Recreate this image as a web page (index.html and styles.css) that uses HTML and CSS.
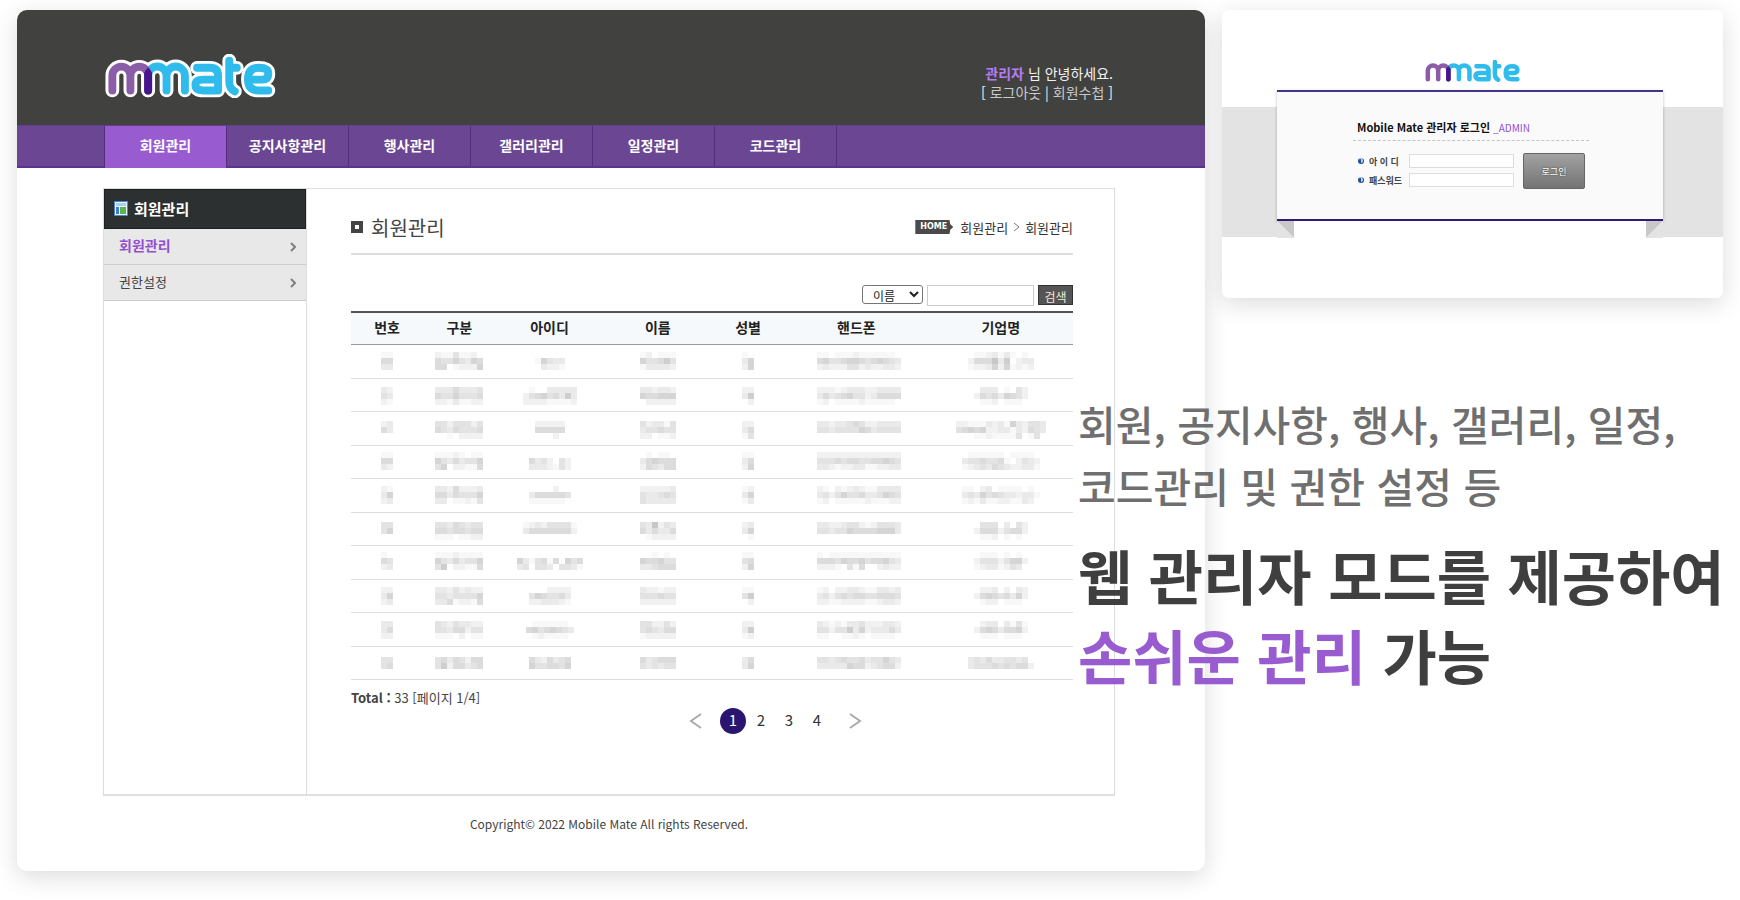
FILE: index.html
```html
<!DOCTYPE html>
<html lang="ko">
<head>
<meta charset="utf-8">
<title>mmate 웹 관리자</title>
<link rel="stylesheet" href="styles.css">
</head>
<body>
<svg class="defs" aria-hidden="true">
  <defs>
    <g id="logo-lines" fill="none" stroke-linecap="round" stroke-linejoin="round">
      <path d="M65 153V108a27 27 0 0 1 55 0V153M120 108a27 27 0 0 1 54 0V153"/>
      <path d="M174 153V108a28 28 0 0 1 56 0V153M230 108a28 28 0 0 1 56 0V153"/>
      <path d="M323 84H362Q387 84 387 108V153H342Q318 153 318 136Q318 120 342 120H387"/>
      <path d="M421 62V126Q421 148 438 156M421 84H444"/>
      <path d="M540 153H510Q478 153 478 119Q478 84 510 84Q540 84 540 102Q540 120 522 120H482"/>
    </g>
    <g id="logo-color" fill="none" stroke-width="24" stroke-linecap="round" stroke-linejoin="round">
      <path stroke="#2fbbeb" d="M174 153V108a28 28 0 0 1 56 0V153M230 108a28 28 0 0 1 56 0V153"/>
      <path stroke="#8b5ca8" d="M65 153V108a27 27 0 0 1 55 0V153M120 108a27 27 0 0 1 54 0V153"/>
      <path stroke="#47168c" d="M174 153V104"/>
      <path fill="#47168c" stroke="none" d="M162 104Q166 88 174 84Q182 90 186 104z"/>
      <path stroke="#2fbbeb" d="M323 84H362Q387 84 387 108V153H342Q318 153 318 136Q318 120 342 120H387"/>
      <path stroke="#2fbbeb" d="M421 62V126Q421 148 438 156M421 84H444"/>
      <path stroke="#2fbbeb" d="M540 153H510Q478 153 478 119Q478 84 510 84Q540 84 540 102Q540 120 522 120H482"/>
    </g>
  </defs>
</svg>
<main class="page">
  <section class="admin">
    <header class="top">
      <a class="brand" href="#" aria-label="mmate">
        <svg viewBox="42 42 522 134" width="173" height="44" aria-hidden="true">
          <use href="#logo-lines" stroke="#fff" stroke-width="42"/>
          <use href="#logo-color"/>
        </svg>
      </a>
      <div class="user">
        <div><strong>관리자</strong> 님 안녕하세요.</div>
        <div>[ <a href="#">로그아웃</a> | <a href="#">회원수첩</a> ]</div>
      </div>
    </header>
    <nav class="nav">
      <a class="on" href="#">회원관리</a>
      <a href="#">공지사항관리</a>
      <a href="#">행사관리</a>
      <a href="#">갤러리관리</a>
      <a href="#">일정관리</a>
      <a href="#">코드관리</a>
    </nav>
    <div class="body">
      <aside class="side">
        <h2>
          <svg width="14" height="15" viewBox="0 0 14 15" aria-hidden="true">
            <path fill="#4f86c6" d="M0 0h14v15H0z"/><path fill="#e6f2fd" d="M1 1h12v13H1z"/>
            <path fill="#a9cff5" d="M2 2h10v3H2z"/><path fill="#3f7fc4" d="M2 6h3v7H2z"/><path fill="#5fb446" d="M6 6h6v7H6z"/>
          </svg>
          회원관리
        </h2>
        <a class="on" href="#">회원관리
          <svg width="6" height="10" viewBox="0 0 6 10" aria-hidden="true"><path d="M1 1l4 4-4 4"/></svg>
        </a>
        <a href="#">권한설정
          <svg width="6" height="10" viewBox="0 0 6 10" aria-hidden="true"><path d="M1 1l4 4-4 4"/></svg>
        </a>
      </aside>
      <div class="content">
        <div class="heading">
          <h1>
            <svg width="12" height="12" viewBox="0 0 12 12" aria-hidden="true"><path fill="#444" d="M0 0h12v12H0z"/><path fill="#fff" d="M4 4h4v4H4z"/></svg>
            회원관리
          </h1>
          <div class="crumbs">
            <a class="home" href="#">HOME</a>
            <span>회원관리</span>
            <svg width="7" height="10" viewBox="0 0 7 10" aria-hidden="true"><path d="M1 1l5 4-5 4"/></svg>
            <span>회원관리</span>
          </div>
        </div>
        <form class="search">
          <select aria-label="검색 항목"><option>이름</option></select>
          <input type="text" aria-label="검색어">
          <button type="button">검색</button>
        </form>
        <table>
          <colgroup><col class="w10"><col class="w10"><col class="w15"><col class="w15"><col class="w10"><col class="w20"><col class="w20"></colgroup>
          <thead>
            <tr><th>번호</th><th>구분</th><th>아이디</th><th>이름</th><th>성별</th><th>핸드폰</th><th>기업명</th></tr>
          </thead>
          <tbody id="members"></tbody>
        </table>
        <p class="total"><strong>Total :</strong> 33 [페이지 1/4]</p>
        <nav class="pager" aria-label="페이지">
          <a class="prev" href="#" aria-label="이전"><svg width="13" height="16" viewBox="0 0 13 16" aria-hidden="true"><path d="M12 1L2 8l10 7"/></svg></a>
          <a class="on" href="#">1</a>
          <a href="#">2</a>
          <a href="#">3</a>
          <a href="#">4</a>
          <a class="next" href="#" aria-label="다음"><svg width="13" height="16" viewBox="0 0 13 16" aria-hidden="true"><path d="M1 1l10 7-10 7"/></svg></a>
        </nav>
      </div>
    </div>
    <footer class="foot">Copyright© 2022 Mobile Mate All rights Reserved.</footer>
  </section>

  <div class="right">
    <section class="login">
      <svg class="login-logo" viewBox="50 46 504 122" width="97" height="23" role="img" aria-label="mmate"><use href="#logo-color"/></svg>
      <form class="panel">
        <h2>Mobile Mate 관리자 로그인 <span>_ADMIN</span></h2>
        <div class="fields">
          <label for="uid">아 이 디</label>
          <input id="uid" type="text">
          <label for="upw">패스워드</label>
          <input id="upw" type="password">
          <button type="button">로그인</button>
        </div>
      </form>
      <div class="folds"><i class="fold-l"></i><i class="fold-r"></i></div>
    </section>
    <div class="caption">
      <p>회원, 공지사항, 행사, 갤러리, 일정,<br>코드관리 및 권한 설정 등</p>
      <h2>웹 관리자 모드를 제공하여<br><em>손쉬운 관리</em> 가능</h2>
    </div>
  </div>
</main>
<script src="members.js"></script>
</body>
</html>
```
FILE: members.js
```js
// Masked member values. Each digit is the darkness of one mosaic block,
// "/" separates lines of blocks. The first entry is the top offset.
var rows = [
  [7, "11/55/33", "21141120/54464365/55012226", "00000/16433/03221", "120111/644574/133332", "10/36/26", "011011121111110/056445665456543/023222442322332", "01123131010/25558370233/12236261212"],
  [8, "32/43/21", "33353334/54464445/22131122", "010033333/245645373/222211112", "332332/655666/022222", "22/37/02", "022212333223333/035345644235555/012011112111110", "033301042/254536542/011201110"],
  [9, "23/53/00", "44244424/54354445/00102222", "22222/55555/00020", "423314/344544/220112", "22/35/14", "033233454223333/044344446534444/000000000000000", "221113231632443/456562233132543/000112111140140"],
  [6, "11/55/32", "11121011/64353446/46022115", "0000000/5342042/3332142", "010110/356555/254355", "11/35/26", "022222222222222/044454554455654/033212233112233", "0111111011110/3445445102432/1234354322331"],
  [7, "21/36/23", "33252223/55354446/33011214", "0000200/3555554/1111110", "222223/433454/433333", "12/36/13", "021021232113333/034246445334654/012011111211122", "1102301111010/3436454332331/1213112211320"],
  [9, "44/46/00", "44354344/55455455/11101122", "123244441/355555552/000000000", "438243/535335/012222", "23/36/01", "033223442124443/044344655556663/000000000000000", "044403042/255524552/011201010"],
  [6, "10/54/23", "11121111/64353446/47022115", "00000000000/63145150645/34044304431", "001010/655644/334555", "11/45/26", "010111111111111/055546556455643/022210415002322", "011101010/244424662/123312430"],
  [7, "22/36/23", "33242322/44344446/33512215", "0002222/4654453/2233321", "322122/444544/222222", "11/47/02", "012022332113323/034245455445554/022112222112332", "022302032/256545362/012201110"],
  [8, "33/35/22", "43243322/44355244/11102011", "01111110/56456543/01211110", "442242/454355/122222", "22/37/12", "032121334222332/044244736233353/011001121011110", "023303141/256535562/011101110"],
  [10, "44/45", "45354255/47255345", "5325345/6445546", "534555/434344", "35/36", "044345445344643/033333655234552", "34353344340/34445454552"]
];

var size = 6;

function mosaic(code, top) {
  var lines = code.split("/");
  var width = lines[0].length * size;
  var out = '<svg width="' + width + '" height="32" aria-hidden="true" shape-rendering="crispEdges">';
  lines.forEach(function (line, y) {
    for (var x = 0; x < line.length; x++) {
      var d = Number(line[x]);
      if (!d) continue;
      var g = 255 - d * 7;
      out += '<rect x="' + x * size + '" y="' + (top + y * size) + '" width="' + size + '" height="' + size + '" fill="rgb(' + g + ',' + g + ',' + g + ')"/>';
    }
  });
  return out + "</svg>";
}

document.getElementById("members").innerHTML = rows.map(function (row) {
  return "<tr>" + row.slice(1).map(function (code) {
    return "<td>" + mosaic(code, row[0]) + "</td>";
  }).join("") + "</tr>";
}).join("");
```
FILE: styles.css
```css
* { box-sizing: border-box; }
body {
  margin: 0;
  background: #fff;
  color: #444;
  font-family: "Noto Sans CJK KR", "Noto Sans", sans-serif;
  font-size: 13px;
}
h1, h2, p { margin: 0; }
a { color: inherit; text-decoration: none; }
.defs { display: none; }

.page {
  display: grid;
  grid-template-columns: minmax(0, 1188fr) minmax(0, 501fr);
  gap: 17px;
  align-items: start;
  padding: 10px 17px 30px;
}

/* Admin screen */
.admin {
  border-radius: 10px;
  background: #fff;
  box-shadow: 0 6px 24px rgba(0, 0, 0, 0.14);
  overflow: hidden;
}
.top {
  display: flex;
  justify-content: space-between;
  height: 115px;
  padding: 44px 92px 0 87px;
  background: #41413f;
}
.brand svg { display: block; }
.user {
  padding-top: 10px;
  color: #f2f2f2;
  font-size: 14px;
  line-height: 19px;
  text-align: right;
}
.user strong { color: #b57cf5; }
.user a { color: #c9c9c9; }

.nav {
  display: flex;
  height: 43px;
  padding-left: 87px;
  background: #6b4793;
  border-top: 1px solid #60408a;
  border-bottom: 2px solid #5c3290;
}
.nav a {
  width: 122px;
  border-left: 1px solid #532d80;
  color: #fff;
  font-size: 14px;
  font-weight: 700;
  line-height: 39px;
  text-align: center;
}
.nav a:last-child { width: 123px; border-right: 1px solid #532d80; }
.nav .on { height: 42px; background: #985bd0; }

.body {
  display: grid;
  grid-template-columns: 203px minmax(0, 1fr);
  min-height: 608px;
  margin: 20px 90px 0 86px;
  border: 1px solid #ddd;
  border-bottom: 2px solid #e0e0e0;
}
.side { border-right: 1px solid #ddd; }
.side h2 {
  display: flex;
  align-items: center;
  gap: 6px;
  height: 40px;
  padding: 0 0 2px 9px;
  border: 1px solid #1e2122;
  background: #2c3031;
  color: #fff;
  font-size: 15px;
}
.side a {
  display: flex;
  align-items: center;
  justify-content: space-between;
  height: 36px;
  padding: 0 10px 3px 15px;
  border-bottom: 1px solid #ccc;
  background: #e8e8e8;
}
.side .on { color: #9250cf; font-size: 14px; font-weight: 700; }
.side a svg { margin-top: 4px; }
.side a path { fill: none; stroke: #808080; stroke-width: 2; }

.content { padding: 23px 41px 0 44px; }
.heading {
  display: flex;
  justify-content: space-between;
  align-items: center;
  height: 43px;
  padding-bottom: 11px;
  border-bottom: 2px solid #dcdcdc;
}
.heading h1 {
  display: flex;
  align-items: center;
  gap: 8px;
  font-size: 20px;
  font-weight: 400;
}
.crumbs { display: flex; align-items: center; gap: 5px; color: #333; }
.crumbs path { fill: none; stroke: #777; }
.home {
  width: 38px;
  margin-right: 2px;
  padding-left: 5px;
  background: #4a4a4a;
  clip-path: polygon(0 0, 90% 0, 92% 30%, 100% 50%, 92% 70%, 90% 100%, 0 100%);
  color: #fff;
  font: 700 8px/14px "DejaVu Sans", sans-serif;
}

.search {
  display: flex;
  justify-content: flex-end;
  gap: 4px;
  height: 56px;
  padding-top: 30px;
}
.search select {
  width: 61px;
  height: 19px;
  padding: 0 0 0 6px;
  border: 1px solid #767676;
  border-radius: 3px;
  background: #fff;
  color: #222;
  font: 12px "Noto Sans CJK KR", sans-serif;
}
.search input {
  width: 107px;
  height: 21px;
  border: 1px solid #ccc;
}
.search button {
  width: 35px;
  height: 20px;
  padding: 2px 0 0;
  border: 1px solid #333;
  background: #555;
  color: #f2ead8;
  font: 12px/15px "Noto Sans CJK KR", sans-serif;
}

table { width: 100%; border-collapse: collapse; table-layout: fixed; }
.w10 { width: 10%; }
.w15 { width: 15%; }
.w20 { width: 20%; }
th {
  height: 32px;
  padding: 0 0 2px;
  border-top: 2px solid #555;
  border-bottom: 1px solid #999;
  background: #f5f9fb;
  color: #222;
  font-size: 14px;
  line-height: 20px;
}
td {
  height: 33px;
  padding: 0;
  border-bottom: 1px solid #dedede;
  text-align: center;
  line-height: 0;
}
tr:nth-child(odd) td { height: 34px; }

.total { padding-top: 9px; font-size: 13px; line-height: 18px; }
.pager {
  display: flex;
  align-items: center;
  justify-content: center;
  gap: 2px;
  padding: 1px 0 0 126px;
  color: #333;
  font-size: 15px;
}
.pager a {
  width: 26px;
  height: 26px;
  line-height: 24px;
  text-align: center;
}
.pager svg { display: block; margin: 5px auto 0; }
.pager path { fill: none; stroke: #aaa; stroke-width: 2; }
.pager .on { border-radius: 50%; background: #2a1670; color: #fff; }
.pager .prev { margin-right: 10px; }
.pager .next { margin-left: 10px; }

.foot {
  padding: 18px 4px 37px 0;
  font-size: 12px;
  line-height: 20px;
  text-align: center;
}

/* Login screen */
.login {
  height: 288px;
  padding-top: 49px;
  border-radius: 7px;
  background: linear-gradient(#fff 97px, #e3e3e3 97px, #e3e3e3 227px, #fff 227px);
  box-shadow: 0 6px 24px rgba(0, 0, 0, 0.14);
}
.login-logo { display: block; margin: 0 auto; }
.panel {
  height: 131px;
  margin: 8px 60px 0 55px;
  padding: 26px 74px 0 76px;
  border-top: 2px solid #43348a;
  border-bottom: 2px solid #2d1a7a;
  background: #fafafa;
  box-shadow: 0 1px 3px rgba(0, 0, 0, 0.25);
}
.panel h2 {
  padding: 0 0 3px 4px;
  border-bottom: 1px dashed #c4c4c4;
  color: #111;
  font-size: 11px;
  font-weight: 700;
  line-height: 19px;
  white-space: nowrap;
}
.panel h2 span { color: #9250cf; font-size: 10px; font-weight: 400; }
.fields {
  display: grid;
  grid-template-columns: 51px 105px 71px;
  grid-template-rows: 14px 14px;
  row-gap: 5px;
  padding: 13px 0 0 5px;
}
.fields label {
  display: flex;
  align-items: center;
  gap: 5px;
  font-size: 9px;
  font-weight: 700;
  white-space: nowrap;
}
.fields label::before {
  content: "";
  width: 4px;
  height: 4px;
  border: 1px solid #1f4f9c;
  border-top-color: #9db8de;
  border-radius: 50%;
  background: linear-gradient(to right, #1f4f9c 50%, #c5d6ee 50%);
}
.fields input {
  min-width: 0;
  width: 105px;
  height: 14px;
  padding: 0 3px;
  border: 1px solid #ddd;
  background: #fff;
}
.fields button {
  grid-column: 3;
  grid-row: 1 / 3;
  width: 62px;
  height: 36px;
  margin: -1px 0 0 9px;
  padding: 0;
  border: 1px solid #666;
  border-radius: 2px;
  background: linear-gradient(#a2a2a2, #747474);
  color: #fff;
  font: 9px "Noto Sans CJK KR", sans-serif;
  text-shadow: 0 0 2px #333;
}
.folds {
  display: flex;
  justify-content: space-between;
  height: 17px;
  margin: 0 60px 0 55px;
  background: #fff;
}
.folds i { width: 17px; }
.fold-l { background: linear-gradient(to top right, #e3e3e3 50%, #c8c8c8 50%); }
.fold-r { background: linear-gradient(to top left, #e3e3e3 50%, #c8c8c8 50%); }

/* Caption laid over the edge of the admin screen */
.caption {
  position: relative;
  margin: 94px 0 0 -144px;
  white-space: nowrap;
}
.caption p {
  color: #6f6f6f;
  font-size: 41px;
  font-weight: 500;
  line-height: 62px;
}
.caption h2 {
  padding-top: 19px;
  color: #3f3f3f;
  font-size: 59px;
  line-height: 80px;
}
.caption em { color: #985bd0; font-style: normal; }
```
